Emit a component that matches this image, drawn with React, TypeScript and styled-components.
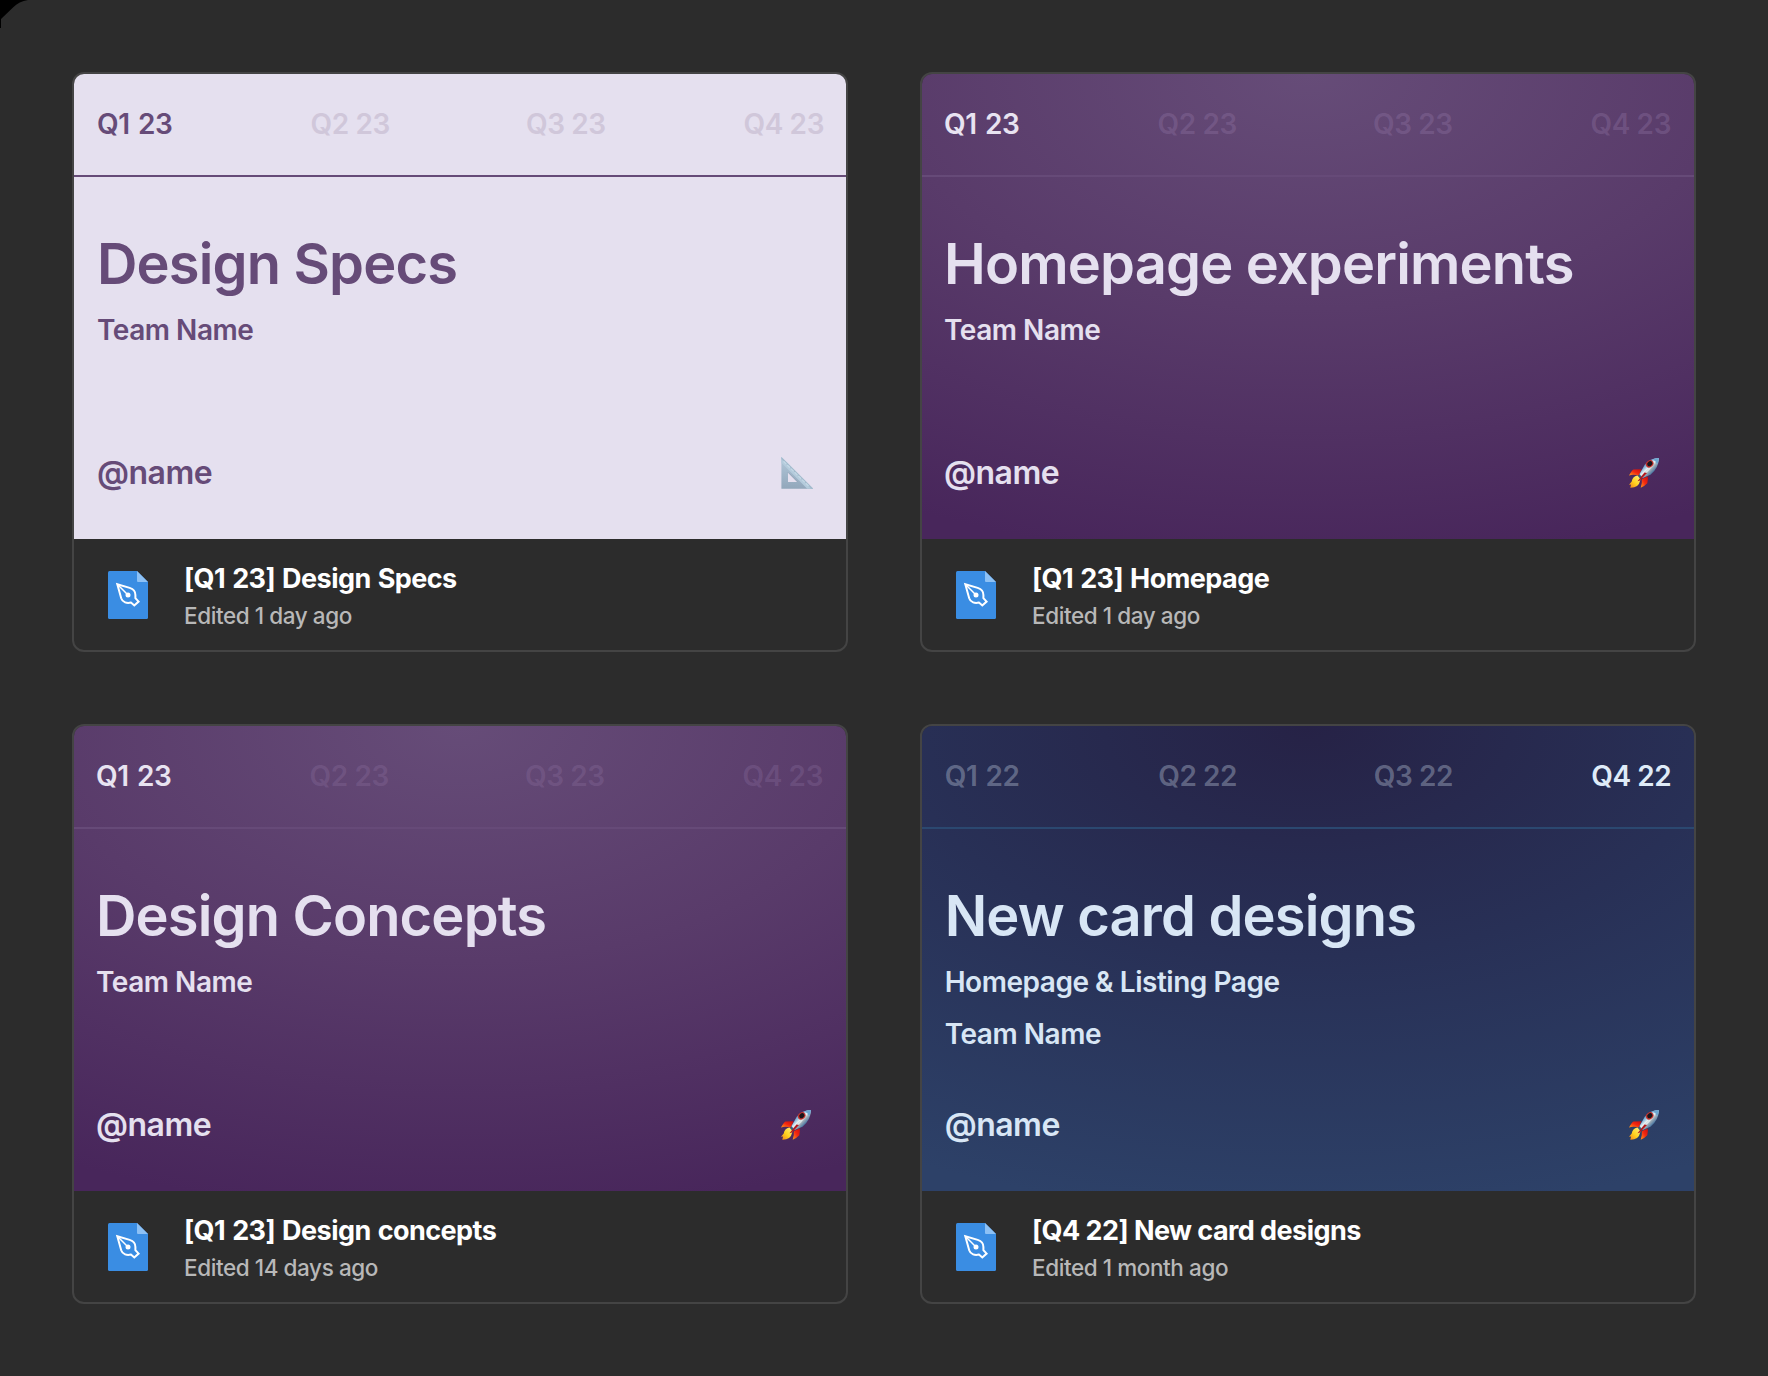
import React from "react";
import styled, { createGlobalStyle } from "styled-components";

type Theme = {
  background: string;
  text: string;
  divider: string;
  muted: string;
  active: string;
  indent: number;
  emojiInset: number;
};

type FileItem = {
  theme: Theme;
  year: string;
  current: number;
  title: string;
  lines: string[];
  emoji: "ruler" | "rocket";
  fileName: string;
  wordGap: number;
  edited: string;
};

const light: Theme = {
  background: "#e5e0ef",
  text: "#664b78",
  divider: "#664b78",
  muted: "#d0c7da",
  active: "#664b78",
  indent: 23,
  emojiInset: 32,
};

const purple: Theme = {
  background:
    "radial-gradient(870px 490px at 50% 0, #664c78 0%, #593b6a 48%, #48265b 100%)",
  text: "#e5e0ef",
  divider: "#664a78",
  muted: "rgba(150, 122, 170, 0.32)",
  active: "#e8e3f1",
  indent: 22,
  emojiInset: 34.5,
};

const purpleSoft: Theme = { ...purple, muted: "rgba(150, 122, 170, 0.27)" };

const blue: Theme = {
  background:
    "radial-gradient(870px 490px at 50% 0, #262246 0%, #283056 47%, #2d4168 100%)",
  text: "#d8e6f5",
  divider: "#2b4870",
  muted: "rgba(216, 230, 245, 0.33)",
  active: "#dfebf8",
  indent: 22.7,
  emojiInset: 34,
};

const files: FileItem[] = [
  {
    theme: light,
    year: "23",
    current: 1,
    title: "Design Specs",
    lines: ["Team Name"],
    emoji: "ruler",
    fileName: "[Q1 23] Design Specs",
    wordGap: 1.2,
    edited: "Edited 1 day ago",
  },
  {
    theme: purple,
    year: "23",
    current: 1,
    title: "Homepage experiments",
    lines: ["Team Name"],
    emoji: "rocket",
    fileName: "[Q1 23] Homepage",
    wordGap: 1.2,
    edited: "Edited 1 day ago",
  },
  {
    theme: purpleSoft,
    year: "23",
    current: 1,
    title: "Design Concepts",
    lines: ["Team Name"],
    emoji: "rocket",
    fileName: "[Q1 23] Design concepts",
    wordGap: 1.2,
    edited: "Edited 14 days ago",
  },
  {
    theme: blue,
    year: "22",
    current: 4,
    title: "New card designs",
    lines: ["Homepage & Listing Page", "Team Name"],
    emoji: "rocket",
    fileName: "[Q4 22] New card designs",
    wordGap: 0,
    edited: "Edited 1 month ago",
  },
];

const GlobalStyle = createGlobalStyle`
  * { box-sizing: border-box; }
  body {
    margin: 0;
    background: #2c2c2c;
    font-family: Inter, "Liberation Sans", sans-serif;
  }
`;

const Page = styled.main`
  position: relative;
  display: grid;
  grid-template-columns: 776px 776px;
  grid-auto-rows: 580px;
  gap: 72px;
  width: 1768px;
  height: 1376px;
  padding: 72px;
  background: #2c2c2c;
`;

const WindowCorner = styled.svg`
  position: absolute;
  top: 0;
  left: 0;
`;

const Card = styled.article`
  display: flex;
  flex-direction: column;
  overflow: hidden;
  border: 2px solid #444;
  border-radius: 12px;
`;

const Cover = styled.section<{ $theme: Theme }>`
  display: flex;
  flex-direction: column;
  height: 465px;
  background: ${(p) => p.$theme.background};
  color: ${(p) => p.$theme.text};
`;

const Quarters = styled.header<{ $theme: Theme }>`
  display: grid;
  grid-template-columns: 213.5px 215.5px 217.5px auto;
  align-items: center;
  height: 103px;
  padding: 0 0 1px ${(p) => p.$theme.indent}px;
  border-bottom: 2px solid ${(p) => p.$theme.divider};
`;

const Quarter = styled.span<{ $color: string; $first: boolean }>`
  color: ${(p) => p.$color};
  font-size: 28px;
  font-weight: 600;
  line-height: 34px;
  letter-spacing: -0.42px;
  word-spacing: ${(p) => (p.$first ? "1.6px" : "0")};
  white-space: nowrap;
`;

const CoverBody = styled.div<{ $indent: number }>`
  display: flex;
  flex: 1;
  flex-direction: column;
  padding: 53px 0 46px ${(p) => p.$indent}px;
`;

const Title = styled.h2`
  margin: 0 0 15px;
  font-size: 56px;
  font-weight: 600;
  line-height: 68px;
  letter-spacing: -0.84px;
  white-space: nowrap;
`;

const Lines = styled.div`
  display: flex;
  flex-direction: column;
  gap: 18px;
`;

const Line = styled.p`
  margin: 0;
  font-size: 28px;
  font-weight: 600;
  line-height: 34px;
  letter-spacing: -0.47px;
`;

const CoverFooter = styled.div<{ $right: number }>`
  display: flex;
  align-items: center;
  justify-content: space-between;
  height: 40px;
  margin-top: auto;
  padding-right: ${(p) => p.$right}px;
`;

const Author = styled.span`
  font-size: 32px;
  font-weight: 600;
  line-height: 40px;
  letter-spacing: -0.5px;
`;

const FileBar = styled.footer`
  display: flex;
  flex: 1;
  align-items: flex-start;
  gap: 36px;
  padding: 0 34px;
`;

const IconSlot = styled.div`
  display: flex;
  padding-top: 32px;
`;

const FileText = styled.div`
  display: flex;
  flex-direction: column;
  gap: 7px;
  padding-top: 24px;
`;

const FileName = styled.span<{ $wordGap: number }>`
  color: #fff;
  font-size: 27px;
  font-weight: 650;
  line-height: 32px;
  letter-spacing: -0.56px;
  word-spacing: ${(p) => p.$wordGap}px;
`;

const Edited = styled.span`
  color: #b8b8b8;
  font-size: 22.5px;
  font-weight: 550;
  line-height: 28px;
  letter-spacing: -0.42px;
`;

function FileIcon() {
  return (
    <svg width="40" height="48" viewBox="0 0 40 48" fill="none">
      <path d="M1.5 0H29L40 11V46.5Q40 48 38.500 48H1.500Q0 48 0 46.500V1.500Q0 0 1.500 0Z" fill="#3a8de3" />
      <path d="M29 0L40 11H30Q29 11 29 10Z" fill="#8dc1f5" />
      <path
        d="M9.300 13.200L21.700 16.900C25.300 18 27.400 20.400 27.400 24V27.100L30.600 30.600L26.300 34.500L23 31.500C19 32.600 14.500 31.400 13.200 27.200Z"
        stroke="#fff"
        strokeWidth="2"
        strokeLinejoin="miter"
      />
      <path d="M9.300 13.200L19.500 23.500" stroke="#fff" strokeWidth="1.500" />
      <circle cx="20" cy="24" r="2.500" fill="#fff" />
    </svg>
  );
}

function Ruler() {
  return (
    <svg width="33" height="33" viewBox="0 1 33 33">
      <defs>
        <linearGradient id="ruler-face" x1="0" y1="0" x2="0" y2="1">
          <stop offset="0" stopColor="#b3c8da" />
          <stop offset="1" stopColor="#92a7bb" />
        </linearGradient>
      </defs>
      <path d="M.4 1L32.200 32.700H.4ZM7 16.300V26H16.600Z" fill="url(#ruler-face)" fillRule="evenodd" />
      <path d="M.4 1L32.200 32.700H26.200L.4 6.800Z" fill="#b4cbdc" />
      <path d="M.4 1L32.200 32.700H30L.4 3Z" fill="#a3bbcd" />
      <path d="M2.500 5.300L28.500 31" stroke="#c5d9e6" strokeWidth="1.200" strokeDasharray="4 1.200" />
      <path d="M7 16.300L16.600 26" stroke="#8499ae" strokeWidth=".8" />
    </svg>
  );
}

function Rocket() {
  return (
    <svg width="32" height="32" viewBox="0 0 32 32">
      <defs>
        <linearGradient id="rocket-body" x1="14" y1="7" x2="24" y2="17" gradientUnits="userSpaceOnUse">
          <stop offset="0" stopColor="#3f7eae" />
          <stop offset=".3" stopColor="#8dbbdc" />
          <stop offset=".5" stopColor="#e9f0f1" />
          <stop offset=".72" stopColor="#9aa9b4" />
          <stop offset="1" stopColor="#3e6fa0" />
        </linearGradient>
        <linearGradient id="rocket-fin" x1="1" y1="0" x2="0" y2="1">
          <stop offset="0" stopColor="#c80e10" />
          <stop offset=".5" stopColor="#f3280f" />
          <stop offset="1" stopColor="#ff9a1c" />
        </linearGradient>
        <linearGradient id="rocket-flame" x1="1" y1="0" x2="0" y2="1">
          <stop offset="0" stopColor="#fff58a" />
          <stop offset=".55" stopColor="#ffd21e" />
          <stop offset="1" stopColor="#f5801b" />
        </linearGradient>
      </defs>
      <path d="M13.500 12.300L5.600 12.500Q4 13 1 18.500Q5 17.200 10.800 18.500Z" fill="url(#rocket-fin)" />
      <path d="M19.600 19.200Q20.500 22 19.300 26.300Q17 29 12.700 30.700Q14.300 26 13.800 22.300Z" fill="url(#rocket-fin)" />
      <path d="M9.300 18.600Q4.500 19.500 3.700 24.500L1 27.800L3.100 27.500L2.300 30.700Q10.800 30.800 12 24L13 21Z" fill="url(#rocket-flame)" />
      <path d="M31 1Q22.500 .8 16.800 7.800L11.200 17.500L14 21.200L22.500 17.700Q30.700 11.200 31 1Z" fill="url(#rocket-body)" />
      <path d="M31 1Q28 .9 25 2.200L29.300 7.200Q31 4 31 1Z" fill="#6da6d0" />
      <path d="M27.300 4L21 12.500L16 17.500" stroke="#eef5f5" strokeWidth="1.400" fill="none" opacity=".65" />
      <path d="M11.300 17L14.400 20.600L12.600 22.200L10.300 19.600Z" fill="#35607f" />
      <path d="M16.500 15.500L19 16L11.500 23.800L9.500 24.300Z" fill="#b5161a" />
      <ellipse cx="21.700" cy="6.900" rx="4.100" ry="3.300" transform="rotate(-38 21.700 6.900)" fill="#c3322c" />
      <ellipse cx="21.800" cy="6.700" rx="2.800" ry="2.300" transform="rotate(-38 21.800 6.700)" fill="#17161c" />
    </svg>
  );
}

function FileCard({ file }: { file: FileItem }) {
  const { theme } = file;
  return (
    <Card>
      <Cover $theme={theme}>
        <Quarters $theme={theme}>
          {[1, 2, 3, 4].map((q) => (
            <Quarter key={q} $first={q === 1} $color={q === file.current ? theme.active : theme.muted}>
              Q{q} {file.year}
            </Quarter>
          ))}
        </Quarters>
        <CoverBody $indent={theme.indent}>
          <Title>{file.title}</Title>
          <Lines>
            {file.lines.map((line) => (
              <Line key={line}>{line}</Line>
            ))}
          </Lines>
          <CoverFooter $right={theme.emojiInset}>
            <Author>@name</Author>
            {file.emoji === "ruler" ? <Ruler /> : <Rocket />}
          </CoverFooter>
        </CoverBody>
      </Cover>
      <FileBar>
        <IconSlot>
          <FileIcon />
        </IconSlot>
        <FileText>
          <FileName $wordGap={file.wordGap}>{file.fileName}</FileName>
          <Edited>{file.edited}</Edited>
        </FileText>
      </FileBar>
    </Card>
  );
}

export default function App() {
  return (
    <>
      <GlobalStyle />
      <Page>
        <WindowCorner width="28" height="28" viewBox="0 0 28 28">
          <path d="M0 0H28C22 .8 17 3.500 13 7.500L1 19V28H0Z" fill="#000" />
        </WindowCorner>
        {files.map((file) => (
          <FileCard key={file.fileName} file={file} />
        ))}
      </Page>
    </>
  );
}
